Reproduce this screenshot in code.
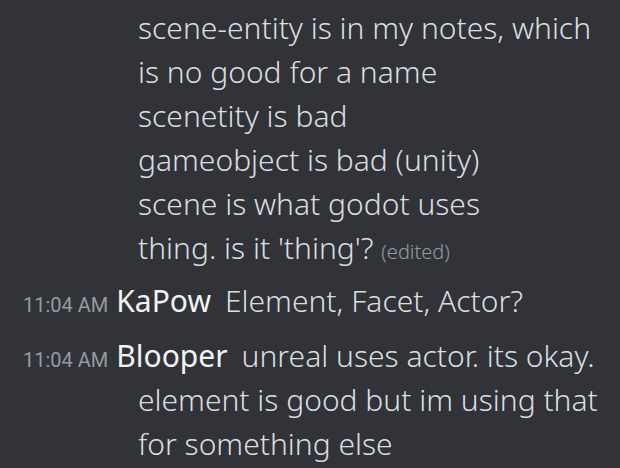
import React from "react";

const lines = [
  "scene-entity is in my notes, which is no good for a name",
  "scenetity is bad",
  "gameobject is bad (unity)",
  "scene is what godot uses",
];

const Stamp = () => (
  <span className="font-['Roboto',sans-serif] font-normal text-[20px] leading-none text-[#949ba4] mr-[8px]">11:04 AM</span>
);

const App = () => {
  return (
    <div className="w-[620px] h-[468px] overflow-hidden bg-[#313338] text-[#dbdee1] font-['Noto_Sans',sans-serif] font-light text-[30px] leading-[44px] pt-[6px]">
      {lines.map((line, i) => (
        <div key={i} className="pl-[138px] pr-[20px]">
          {line}
        </div>
      ))}
      <div className="pl-[138px] pr-[20px]">
        thing. is it 'thing'? <span className="text-[20px] leading-none text-[#949ba4]">(edited)</span>
      </div>
      <div className="mt-[9px] pl-[138px] -indent-[115px] pr-[20px]">
        <Stamp />
        <span className="font-normal text-[#f2f3f5] mr-[14px]">KaPow</span>
        Element, Facet, Actor?
      </div>
      <div className="mt-[11px] pl-[138px] -indent-[115px] pr-[20px]">
        <Stamp />
        <span className="font-normal text-[#f2f3f5] mr-[14px]">Blooper</span>
        unreal uses actor. its okay. element is good but im using that for something else
      </div>
    </div>
  );
};

export default App;
